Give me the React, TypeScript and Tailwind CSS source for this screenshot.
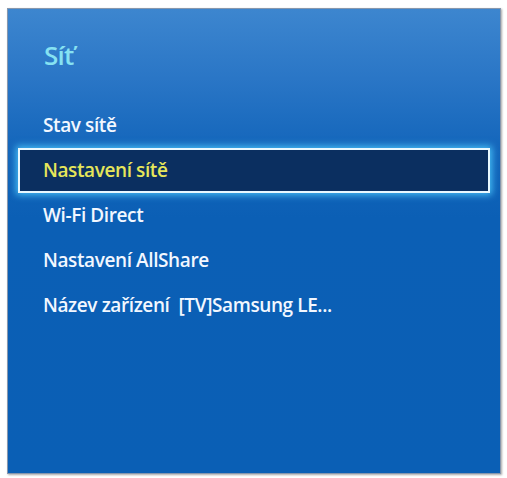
const items = [
  { label: 'Stav sítě' },
  { label: 'Nastavení sítě', selected: true },
  { label: 'Wi-Fi Direct' },
  { label: 'Nastavení AllShare' },
  { label: 'Název zařízení\u00a0\u00a0[TV]Samsung LE...' },
]

export default function App() {
  return (
    <div className="min-h-screen bg-white pl-[7px] pt-[8px]" style={{ fontFamily: '"Open Sans", "Noto Sans", sans-serif' }}>
      <div className="w-[494px] h-[466px] border border-[#8797ad] shadow-[1px_1px_2px_rgba(0,0,0,0.35)] bg-[linear-gradient(180deg,#3d86cf_0%,#2a76c6_15%,#1466bb_30%,#0b5fb5_45%,#0a5fb5_100%)] flex flex-col">
        <div className="pl-[36px] pt-[30px] text-[26px] leading-[32px] font-semibold text-[#86e2f2] tracking-[-0.8px]">
          Síť
        </div>
        <ul className="mt-[32px] flex flex-col">
          {items.map(item => (
            <li
              key={item.label}
              className={
                item.selected
                  ? 'mx-[10px] h-[45px] pl-[23px] border-2 border-[#e8f8ff] bg-[#0b2f60] shadow-[0_0_7px_2px_rgba(80,205,255,0.85)] text-[#e6e65a] text-[19px] leading-[41px] font-semibold tracking-[-0.4px]'
                  : 'mx-[10px] h-[45px] pl-[25px] text-[#f2f7ff] text-[19px] leading-[45px] font-semibold tracking-[-0.4px]'
              }
            >
              {item.label}
            </li>
          ))}
        </ul>
      </div>
    </div>
  )
}
